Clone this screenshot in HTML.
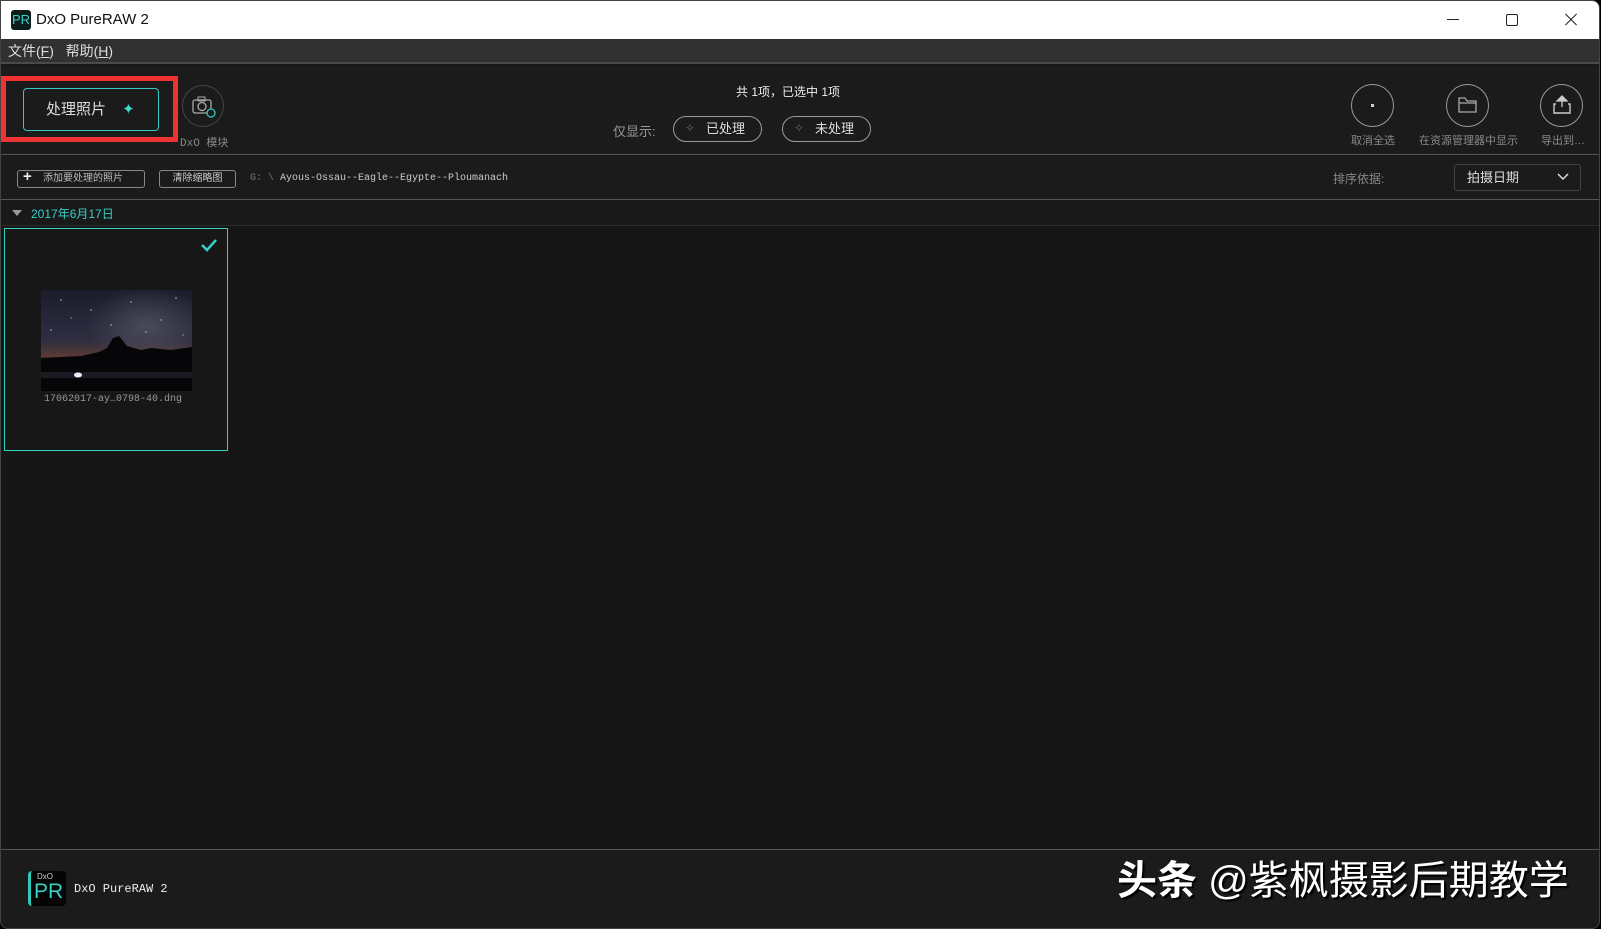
<!DOCTYPE html>
<html><head><meta charset="utf-8"><style>
*{margin:0;padding:0;box-sizing:border-box}
body{width:1601px;height:929px;background:#000;overflow:hidden;font-family:"Liberation Sans","Noto Sans CJK SC",sans-serif;position:relative}
.a{position:absolute}
.win{left:0;top:0;width:1600px;height:929px;background:#161616;border:1px solid #444;border-radius:0 8px 8px 8px;overflow:hidden}
.mono{font-family:"Liberation Mono","Noto Sans CJK SC",monospace}
</style></head><body>
<div class="a win">
 <div class="a" style="left:0;top:0;width:1600px;height:38px;background:#fff"></div>
 <div class="a" style="left:10px;top:9px;width:20px;height:20px;background:#0e1c1c;border-radius:3px;color:#2fd3c8;font-size:13px;line-height:20px;text-align:center">PR</div>
 <div class="a" style="left:35px;top:10px;font-size:15px;color:#111">DxO PureRAW 2</div>
 <div class="a" style="left:1446px;top:18px;width:12px;height:1px;background:#222"></div>
 <div class="a" style="left:1505px;top:13px;width:12px;height:12px;border:1px solid #222;border-radius:2px"></div>
 <div class="a" style="left:1562px;top:18px;width:16px;height:1px;background:#222;transform:rotate(45deg)"></div>
 <div class="a" style="left:1562px;top:18px;width:16px;height:1px;background:#222;transform:rotate(-45deg)"></div>
 <div class="a" style="left:0;top:38px;width:1600px;height:25px;background:#313131;border-bottom:2px solid #4a4a4a"></div>
 <div class="a" style="left:7px;top:40px;font-size:14px;color:#ddd">文件(<u>F</u>)&nbsp;&nbsp; 帮助(<u>H</u>)</div>
 <div class="a" style="left:0;top:64px;width:1600px;height:90px;background:#1b1b1b;border-bottom:1px solid #555"></div>
 <div class="a" style="left:0;top:75px;width:177px;height:66px;border:5px solid #ef3333"></div>
 <div class="a" style="left:22px;top:87px;width:136px;height:43px;border:1px solid #33c9c0;border-radius:4px;color:#ddd;font-size:15px;line-height:41px;padding-left:22px">处理照片 <span style="color:#3fd8cc;margin-left:12px">✦</span></div>
 <div class="a" style="left:181px;top:84px;width:42px;height:42px;border:1px solid #444;border-radius:50%"></div>
 <svg class="a" style="left:190px;top:94px" width="26" height="24"><rect x="2" y="5" width="18" height="13" rx="2" fill="none" stroke="#aaa" stroke-width="1.3"/><rect x="7" y="2" width="7" height="4" fill="none" stroke="#aaa"/><circle cx="11" cy="11.5" r="4" fill="none" stroke="#aaa" stroke-width="1.3"/><circle cx="20" cy="18" r="4" fill="#1b1b1b" stroke="#33c9c0" stroke-width="1.3"/></svg>
 <div class="a mono" style="left:179px;top:133px;font-size:11px;color:#888">DxO 模块</div>
 <div class="a" style="left:735px;top:82px;font-size:12px;color:#eee">共 1项，已选中 1项</div>
 <div class="a" style="left:612px;top:120px;font-size:13px;color:#999">仅显示:</div>
 <div class="a" style="left:672px;top:115px;width:89px;height:26px;border:1px solid #999;border-radius:13px;color:#ddd;font-size:13px;line-height:24px;padding-left:32px">已处理</div>
 <div class="a" style="left:684px;top:120px;color:#666;font-size:12px">✧</div>
 <div class="a" style="left:781px;top:115px;width:89px;height:26px;border:1px solid #999;border-radius:13px;color:#ddd;font-size:13px;line-height:24px;padding-left:32px">未处理</div>
 <div class="a" style="left:793px;top:120px;color:#666;font-size:12px">✧</div>
 <div class="a" style="left:1350px;top:83px;width:43px;height:43px;border:1.5px solid #999;border-radius:50%"></div>
 <div class="a" style="left:1370px;top:103px;width:3px;height:3px;background:#ccc"></div>
 <div class="a" style="left:1445px;top:83px;width:43px;height:43px;border:1.5px solid #999;border-radius:50%"></div>
 <svg class="a" style="left:1456px;top:94px" width="22" height="20"><path d="M2 3h6l2 3h9v11H2z M2 8h17" fill="none" stroke="#aaa" stroke-width="1.3"/></svg>
 <div class="a" style="left:1539px;top:83px;width:43px;height:43px;border:1.5px solid #999;border-radius:50%"></div>
 <svg class="a" style="left:1550px;top:93px" width="22" height="22"><path d="M11 2v11M6 7l5-5 5 5z" fill="#ccc" stroke="#ccc" stroke-width="1.3"/><path d="M5 10H3v9h16v-9h-2" fill="none" stroke="#ccc" stroke-width="1.4"/></svg>
 <div class="a" style="left:1350px;top:131px;font-size:11px;color:#888">取消全选</div>
 <div class="a" style="left:1418px;top:131px;font-size:11px;color:#888">在资源管理器中显示</div>
 <div class="a" style="left:1540px;top:131px;font-size:11px;color:#888">导出到…</div>
 <div class="a" style="left:0;top:155px;width:1600px;height:44px;background:#1b1b1b;border-bottom:1px solid #555"></div>
 <div class="a" style="left:16px;top:169px;width:128px;height:18px;border:1px solid #888;border-radius:3px;color:#bbb;font-size:10px;line-height:16px;padding-left:25px">添加要处理的照片</div>
 <div class="a" style="left:22px;top:167px;color:#eee;font-size:15px;font-weight:bold">+</div>
 <div class="a" style="left:158px;top:169px;width:77px;height:18px;border:1px solid #888;border-radius:3px;color:#ccc;font-size:10px;line-height:16px;text-align:center">清除缩略图</div>
 <div class="a mono" style="left:249px;top:172px;font-size:10px;color:#ccc"><span style="color:#777">G: \</span> Ayous-Ossau--Eagle--Egypte--Ploumanach</div>
 <div class="a" style="left:1332px;top:169px;font-size:12px;color:#888">排序依据:</div>
 <div class="a" style="left:1453px;top:163px;width:127px;height:27px;border:1px solid #444;border-radius:3px;color:#ddd;font-size:13px;line-height:25px;padding-left:12px">拍摄日期</div>
 <svg class="a" style="left:1556px;top:172px" width="12" height="8"><path d="M1 1l5 5 5-5" fill="none" stroke="#ddd" stroke-width="1.5"/></svg>
 <div class="a" style="left:0;top:200px;width:1600px;height:25px;background:#191919;border-bottom:1px solid #2c2c2c"></div>
 <div class="a" style="left:11px;top:209px;width:0;height:0;border-left:5px solid transparent;border-right:5px solid transparent;border-top:6px solid #999"></div>
 <div class="a" style="left:30px;top:204px;font-size:12px;color:#35cfc6">2017年6月17日</div>
 <div class="a" style="left:3px;top:227px;width:224px;height:223px;border:1px solid #35d0c6;background:#171717"></div>
 <svg class="a" style="left:200px;top:237px" width="16" height="14"><path d="M1 7l5 5 9-10" fill="none" stroke="#35d0c6" stroke-width="2.5"/></svg>
 <svg class="a" style="left:40px;top:289px" width="151" height="101">
  <defs><linearGradient id="g" x1="0" y1="0" x2="0" y2="1"><stop offset="0" stop-color="#1a1c2c"/><stop offset=".5" stop-color="#2e2e40"/><stop offset=".66" stop-color="#5a3a34"/><stop offset=".72" stop-color="#0a0a0c"/></linearGradient>
  <radialGradient id="m" cx=".7" cy=".35" r=".4"><stop offset="0" stop-color="#6a6a7a" stop-opacity=".5"/><stop offset="1" stop-color="#6a6a7a" stop-opacity="0"/></radialGradient></defs>
  <rect width="151" height="101" fill="url(#g)"/>
  <rect width="151" height="101" fill="url(#m)"/>
  <path d="M0 68 L40 66 58 62 66 58 72 48 78 46 86 56 100 60 110 58 130 60 151 57 V101H0z" fill="#060608"/>
  <path d="M0 85 H151" stroke="#1a1a22" stroke-width="6"/>
  <ellipse cx="37" cy="85" rx="4" ry="2.5" fill="#eef"/>
  <g fill="#ccd"><circle cx="20" cy="10" r=".7"/><circle cx="50" cy="20" r=".7"/><circle cx="90" cy="12" r=".7"/><circle cx="120" cy="30" r=".7"/><circle cx="70" cy="35" r=".7"/><circle cx="135" cy="8" r=".7"/><circle cx="10" cy="40" r=".7"/><circle cx="105" cy="42" r=".7"/><circle cx="30" cy="28" r=".6"/><circle cx="142" cy="45" r=".6"/></g>
 </svg>
 <div class="a mono" style="left:43px;top:393px;font-size:10px;color:#999">17062017-ay…0798-40.dng</div>
 <div class="a" style="left:0;top:848px;width:1600px;height:81px;background:#1b1b1b;border-top:1px solid #555"></div>
 <div class="a" style="left:27px;top:870px;width:38px;height:35px;background:#050505;border-radius:4px;border-left:3px solid #2fc9bc"></div>
 <div class="a" style="left:36px;top:871px;font-size:8px;color:#ccc">DxO</div>
 <div class="a" style="left:33px;top:879px;font-size:21px;color:#35d0c6;line-height:24px">PR</div>
 <div class="a mono" style="left:73px;top:881px;font-size:12px;color:#eee">DxO PureRAW 2</div>
 <div class="a" style="left:1116px;top:847px;font-size:40px;color:#fff;text-shadow:2px 2px 1px #000;white-space:nowrap"><b>头条</b> @紫枫摄影后期教学</div>
</div>
</body></html>
